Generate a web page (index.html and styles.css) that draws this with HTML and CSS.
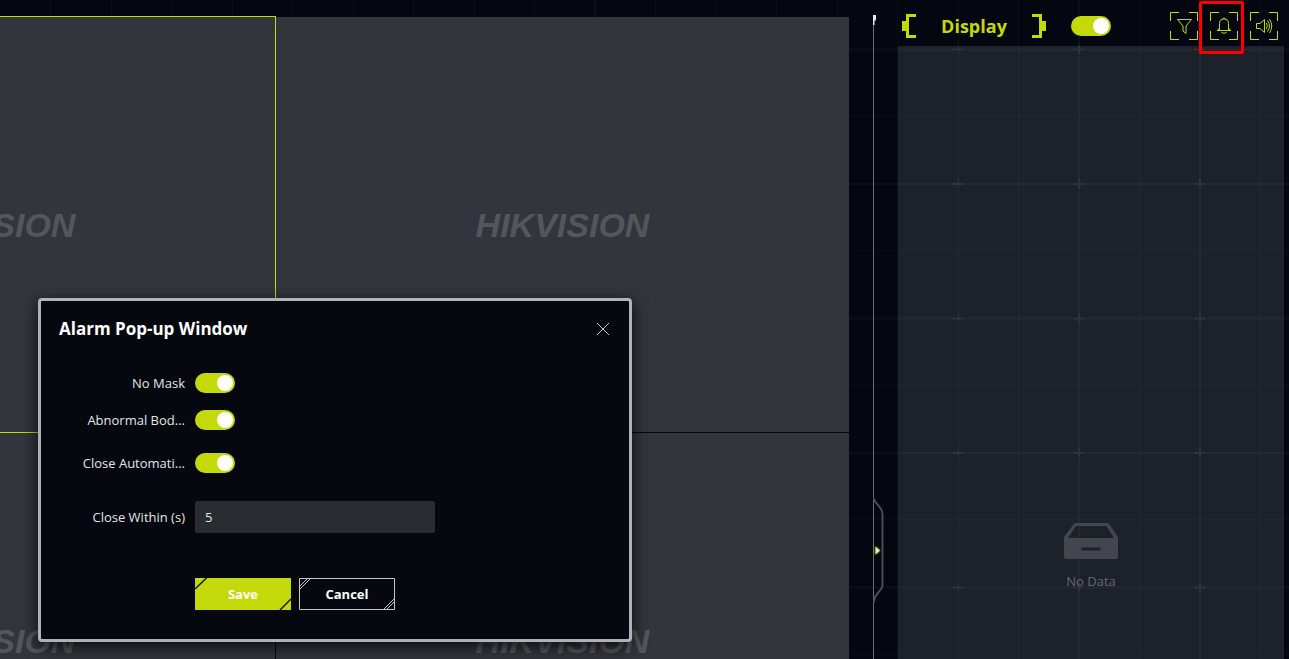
FILE: index.html
```html
<!DOCTYPE html>
<html lang="en">
<head>
<meta charset="utf-8">
<title>Alarm Pop-up Window</title>
<link rel="stylesheet" href="styles.css">
</head>
<body>
<svg class="backdrop" aria-hidden="true">
  <defs>
    <pattern id="mesh" x="-11" y="-86" width="121" height="134.5" patternUnits="userSpaceOnUse">
      <path class="mesh-line" d="M61 0h1v134.5h-1zM0 67h121v1H0z"/>
      <path class="mesh-line" d="M0 0h2v134.5H0zM0 0h121v2H0z"/>
      <path class="mesh-cross" d="M0 0h6v2H0zM0 0h2v5H0zM116 0h5v2h-5zM0 130h2v4.500H0z"/>
    </pattern>
  </defs>
  <rect width="100%" height="100%" fill="url(#mesh)"/>
</svg>
<div class="app">
  <main class="stage">
    <div class="video-grid">
      <div class="video selected"><span class="brand">HIKVISION</span></div>
      <div class="video"><span class="brand">HIKVISION</span></div>
      <div class="video"><span class="brand">HIKVISION</span></div>
      <div class="video"><span class="brand">HIKVISION</span></div>
    </div>
  </main>
  <div class="rail">
    <div class="rail-line"></div>
    <div class="rail-cap"></div>
    <button class="rail-handle" type="button" aria-label="Collapse panel">
      <svg width="12" height="108" viewBox="0 0 12 108" fill="none">
        <path d="M0 0l1.500 3.500 6.500 8.500Q9.500 14 9.500 18v70q0 2-1.500 4L2 100l-1.500 6" stroke="#4f5259" stroke-width="1.800"/>
        <path class="rail-arrow" d="M2.500 49.500l4.500 4-4.500 4z"/>
      </svg>
    </button>
  </div>
  <aside class="side">
    <header class="side-head">
      <div class="title">
        <svg width="14" height="24" viewBox="0 0 14 24" aria-hidden="true"><path d="M4 0h10v3H7v18h7v3H4v-7H0V7h4z"/></svg>
        <h2>Display</h2>
        <svg width="14" height="24" viewBox="0 0 14 24" aria-hidden="true"><path d="M10 0H0v3h7v18H0v3h10v-7h4V7h-4z"/></svg>
      </div>
      <input class="switch" type="checkbox" role="switch" aria-label="Display" checked>
      <div class="tools">
        <button class="tool" type="button" aria-label="Filter">
          <svg width="28" height="28" viewBox="0 0 28 28"><path d="M.5 9V.5H9M19 .5h8.500V9M27.500 19v8.500H19M9 27.500H.5V19"/><path d="M7.500 7.500h14l-5.500 6.500v7.500l-3-2.500v-5z"/></svg>
        </button>
        <button class="tool marked" type="button" aria-label="Alarm pop-up">
          <svg width="28" height="28" viewBox="0 0 28 28"><path d="M.5 9V.5H9M19 .5h8.500V9M27.500 19v8.500H19M9 27.500H.5V19"/><path d="M7 18.500h14M9.500 18v-6.500q0-4.500 4.500-4.500t4.500 4.500V18M9.500 16l-2 2.500M18.500 16l2 2.500M13 7q0-1 1-1t1 1M11.500 20.500q2.500 1.500 5 0"/></svg>
        </button>
        <button class="tool" type="button" aria-label="Sound">
          <svg width="28" height="28" viewBox="0 0 28 28"><path d="M.5 9V.5H9M19 .5h8.500V9M27.500 19v8.500H19M9 27.500H.5V19"/><path d="M6.500 11.500H10l4.500-4v13l-4.500-4H6.500zM16.500 11q1.500 3 0 6M17.500 8.500q4 5.500 0 11M19.500 7q4.500 7 0 14"/></svg>
        </button>
      </div>
    </header>
    <section class="empty">
      <svg width="54" height="36" viewBox="0 0 54 36" aria-hidden="true"><path fill-rule="evenodd" d="M10.500 0h34L54 14v20q0 2-2 2H2q-2 0-2-2V14zM12 3L4 15h46L42.500 3zM17.500 24.500v3h19v-3z"/></svg>
      <p>No Data</p>
    </section>
  </aside>
</div>

<div class="dialog" role="dialog" aria-labelledby="dialog-title">
  <div class="dialog-head">
    <h1 id="dialog-title">Alarm Pop-up Window</h1>
    <button class="close" type="button" aria-label="Close">
      <svg width="14" height="14" viewBox="0 0 14 14"><path d="M1 1l12 12M13 1L1 13"/></svg>
    </button>
  </div>
  <form class="form">
    <div class="row"><label for="mask">No Mask</label><input class="switch" id="mask" type="checkbox" role="switch" checked></div>
    <div class="row"><label for="temp">Abnormal Bod...</label><input class="switch" id="temp" type="checkbox" role="switch" checked></div>
    <div class="row auto"><label for="auto">Close Automati...</label><input class="switch" id="auto" type="checkbox" role="switch" checked></div>
    <div class="row time"><label for="time">Close Within (s)</label><input class="field" id="time" type="text" value="5"></div>
    <div class="actions">
      <button class="btn primary" type="button"><svg viewBox="0 0 96 32"><path d="M0 11L11.500 0M85 32l11-11"/></svg><span>Save</span></button>
      <button class="btn" type="button"><svg viewBox="0 0 96 32"><path d="M.5.5h95v31H.5zM0 9L9 0M0 12L12 0M84 32l12-12M87 32l9-9"/></svg><span>Cancel</span></button>
    </div>
  </form>
</div>
</body>
</html>
```
FILE: styles.css
```css
:root {
  --lime: #c4d90a;
  --night: #04070f;
}

* {
  box-sizing: border-box;
}

body {
  margin: 0;
  height: 100vh;
  overflow: hidden;
  background: var(--night);
  color: #fff;
  font: 13px/20px "Open Sans", "Noto Sans", sans-serif;
}

h1, h2, p {
  margin: 0;
}

button {
  padding: 0;
  border: 0;
  background: none;
  color: inherit;
  font: inherit;
}

svg {
  display: block;
}

.backdrop {
  position: absolute;
  inset: 0;
  width: 100%;
  height: 100%;
}

.mesh-line {
  fill: rgba(255, 255, 255, 0.03);
}

.mesh-cross {
  fill: rgba(255, 255, 255, 0.05);
}

.app {
  position: relative;
  display: flex;
  height: 100%;
}

.stage {
  flex: 1;
  min-width: 0;
  padding-top: 17px;
  overflow: hidden;
}

/* The left column runs partly beyond the window edge. */
.video-grid {
  display: grid;
  grid-template-columns: 1fr 1fr;
  grid-auto-rows: 415px;
  gap: 1px;
  margin-left: -298px;
  background: var(--night);
}

.video {
  display: flex;
  align-items: center;
  justify-content: center;
  background: #33353d;
}

.video.selected {
  outline: 1px solid var(--lime);
}

.brand {
  color: #55565b;
  font: italic 700 34px/40px "Liberation Sans", Arial, sans-serif;
}

.rail {
  position: relative;
  flex: none;
  width: 49px;
  padding: 16px 0 0 24px;
}

.rail-line {
  width: 1px;
  height: 100%;
  background: #6b6d72;
}

.rail-cap {
  position: absolute;
  top: 15px;
  left: 24px;
  width: 3px;
  height: 10px;
  background: #e8e8e8;
  clip-path: polygon(0 0, 100% 0, 100% 50%, 50% 60%, 50% 100%, 0 100%);
}

.rail-handle {
  position: absolute;
  top: 497px;
  left: 24px;
}

.rail-arrow {
  fill: #e4e8c4;
  filter: drop-shadow(0 0 1px var(--lime));
}

.side {
  display: flex;
  flex: none;
  flex-direction: column;
  width: 391px;
  padding-right: 5px;
}

.side-head {
  display: flex;
  align-items: center;
  height: 46px;
  padding: 6px 6px 0 4px;
}

.title {
  display: flex;
  align-items: center;
  justify-content: space-between;
  width: 144px;
  margin-right: 25px;
  fill: var(--lime);
}

.title h2 {
  color: var(--lime);
  font-size: 18px;
  line-height: 24px;
  font-weight: 700;
}

.switch {
  display: flex;
  align-items: center;
  justify-content: flex-end;
  width: 40px;
  height: 20px;
  margin: 0;
  padding: 2px;
  border-radius: 10px;
  background: var(--lime);
  appearance: none;
}

.switch::before {
  content: "";
  width: 16px;
  height: 16px;
  border-radius: 50%;
  background: #fff;
}

.tools {
  display: flex;
  gap: 12px;
  margin-left: auto;
}

.tool {
  position: relative;
  fill: none;
  stroke: var(--lime);
}

.marked::after {
  content: "";
  position: absolute;
  inset: -11px -6px -14px -11px;
  border: 3px solid #f00;
  border-radius: 2px;
}

.empty {
  display: flex;
  flex: 1;
  flex-direction: column;
  align-items: center;
  justify-content: flex-end;
  gap: 12px;
  padding-bottom: 68px;
  background: rgba(240, 245, 255, 0.11);
  color: #65686e;
  fill: #44464e;
}

.dialog {
  position: absolute;
  top: 298px;
  left: 38px;
  width: 594px;
  padding: 18px 19px 29px 18px;
  border: 3px solid #b1b2b5;
  border-radius: 4px;
  background: #05080f;
  box-shadow: 0 4px 16px rgba(0, 0, 0, 0.8);
}

.dialog-head {
  display: flex;
  align-items: center;
  justify-content: space-between;
  height: 20px;
}

.dialog-head h1 {
  font-size: 17px;
  line-height: 20px;
}

.close {
  stroke: #c8c9cb;
  fill: none;
}

.form {
  padding-top: 34px;
}

.row {
  display: flex;
  align-items: center;
  gap: 10px;
  margin-bottom: 17px;
}

.row label {
  width: 126px;
  text-align: right;
  color: #e3e4e6;
}

.row.auto {
  margin: 23px 0 28px;
}

.row.time {
  margin-bottom: 45px;
}

.field {
  width: 240px;
  height: 32px;
  padding: 0 10px;
  border: 0;
  border-radius: 2px;
  background: #292c30;
  color: #e3e4e6;
  font: inherit;
}

.actions {
  display: flex;
  gap: 8px;
  padding-left: 136px;
}

.btn {
  position: relative;
  width: 96px;
  height: 32px;
  font-weight: 700;
  fill: none;
  stroke: #c4c5c8;
}

.btn svg {
  position: absolute;
  inset: 0;
}

.btn.primary {
  background: var(--lime);
  stroke: #14170a;
  stroke-width: 1.5px;
}
```
